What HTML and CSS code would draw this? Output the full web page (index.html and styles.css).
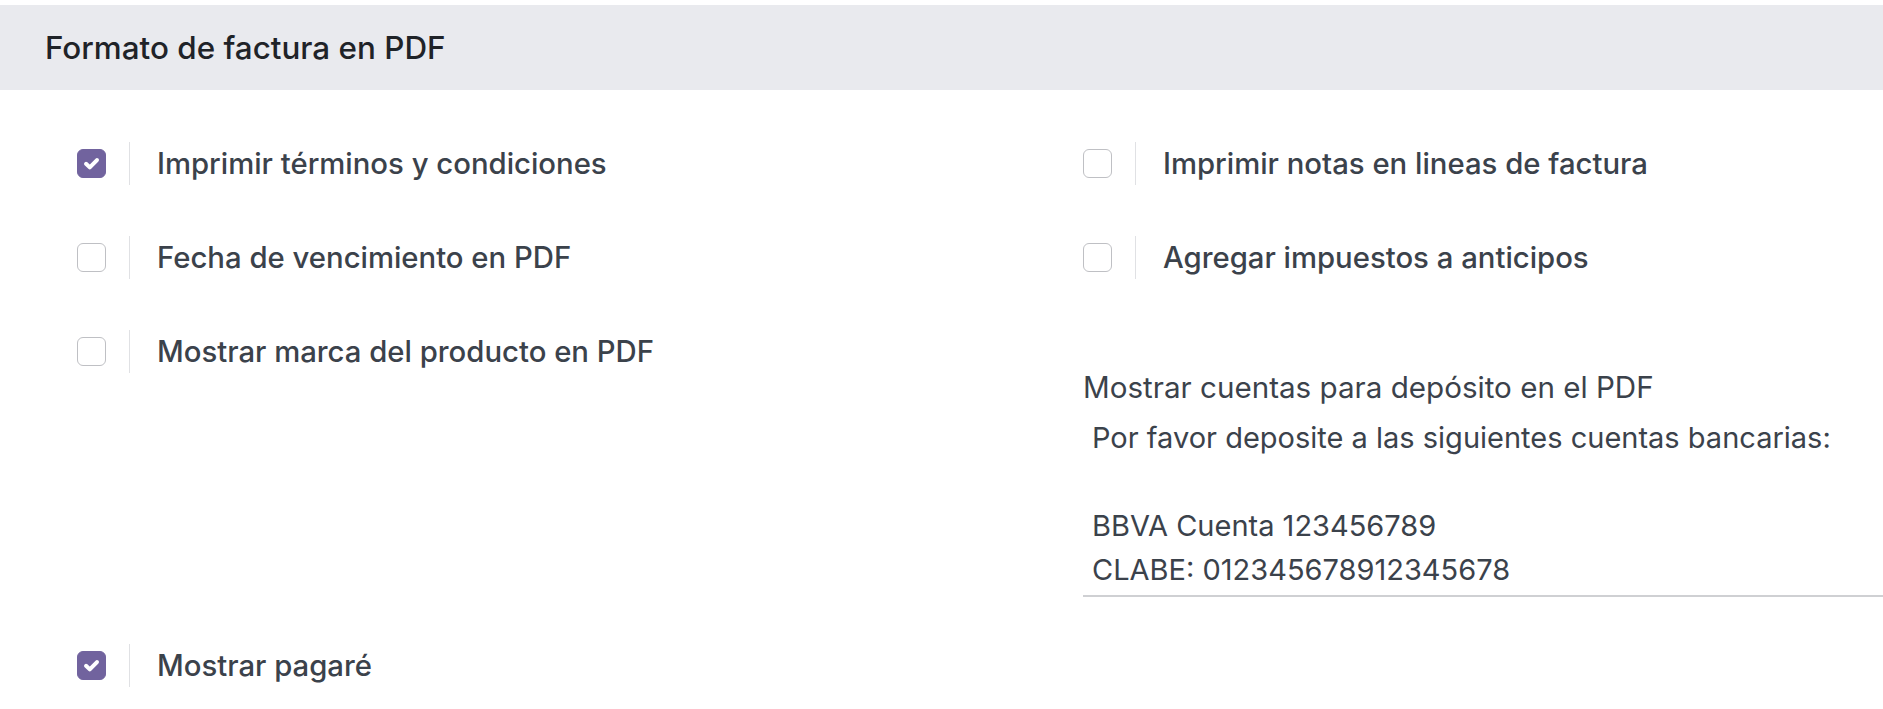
FILE: index.html
```html
<!DOCTYPE html>
<html lang="es">
<head>
<meta charset="utf-8">
<title>Formato de factura en PDF</title>
<link rel="stylesheet" href="styles.css">
</head>
<body>
  <div class="section-header">Formato de factura en PDF</div>
  <div class="settings">
    <div class="setting">
      <span class="check checked"><svg viewBox="0 0 16 16"><path d="M4.2 8.2l2.6 2.5 5-5.1"/></svg></span>
      <div class="pane"><span class="label">Imprimir términos y condiciones</span></div>
    </div>
    <div class="setting">
      <span class="check"></span>
      <div class="pane"><span class="label">Imprimir notas en lineas de factura</span></div>
    </div>
    <div class="setting">
      <span class="check"></span>
      <div class="pane"><span class="label">Fecha de vencimiento en PDF</span></div>
    </div>
    <div class="setting">
      <span class="check"></span>
      <div class="pane"><span class="label">Agregar impuestos a anticipos</span></div>
    </div>
    <div class="setting">
      <span class="check"></span>
      <div class="pane"><span class="label">Mostrar marca del producto en PDF</span></div>
    </div>
    <div class="deposit">
      <div class="label">Mostrar cuentas para depósito en el PDF</div>
      <div class="textbox">Por favor deposite a las siguientes cuentas bancarias:

BBVA Cuenta 123456789
CLABE: 012345678912345678</div>
    </div>
    <div class="setting last">
      <span class="check checked"><svg viewBox="0 0 16 16"><path d="M4.2 8.2l2.6 2.5 5-5.1"/></svg></span>
      <div class="pane"><span class="label">Mostrar pagaré</span></div>
    </div>
  </div>
</body>
</html>
```

FILE: styles.css
```css
html, body {
  margin: 0;
  padding: 0;
  background: #ffffff;
}
body {
  font-family: Inter, Roboto, "Noto Sans", "Liberation Sans", sans-serif;
  color: #3b424b;
  overflow: hidden;
}
.section-header {
  margin-top: 5px;
  height: 85px;
  background: #e9eaee;
  display: flex;
  align-items: center;
  padding-left: 45px;
  font-size: 31.4px;
  font-weight: 500;
  color: #1f2328;
}
.settings {
  display: grid;
  grid-template-columns: 1006px 800px;
  padding-left: 77px;
  padding-top: 52px;
  row-gap: 51px;
  align-items: start;
}
.setting {
  display: flex;
  align-items: center;
}
.setting.last {
  grid-column: 1;
  margin-top: -4px;
}
.check {
  width: 29px;
  height: 29px;
  box-sizing: border-box;
  border: 1.6px solid #bfc0c4;
  border-radius: 6px;
  background: #fff;
  display: flex;
  align-items: center;
  justify-content: center;
  flex: none;
}
.check.checked {
  background: #71639e;
  border-color: #71639e;
}
.check svg {
  width: 23px;
  height: 23px;
  fill: none;
  stroke: #ffffff;
  stroke-width: 2.8;
  stroke-linecap: round;
  stroke-linejoin: round;
}
.pane {
  margin-left: 23px;
  border-left: 1.5px solid #e0e1e4;
  padding-left: 27px;
  height: 43px;
  display: flex;
  align-items: center;
}
.label {
  font-size: 29.3px;
  font-weight: 500;
  line-height: 42px;
  color: #3b424b;
}
.deposit {
  padding-top: 36px;
}
.deposit .label {
  font-size: 29.6px;
  font-weight: 400;
  color: #3b424b;
}
.textbox {
  margin-top: 4px;
  padding: 4px 9px 3px;
  border-bottom: 2px solid #cfd0d3;
  white-space: pre-line;
  font-size: 29px;
  line-height: 44px;
  color: #3b424b;
}
```
